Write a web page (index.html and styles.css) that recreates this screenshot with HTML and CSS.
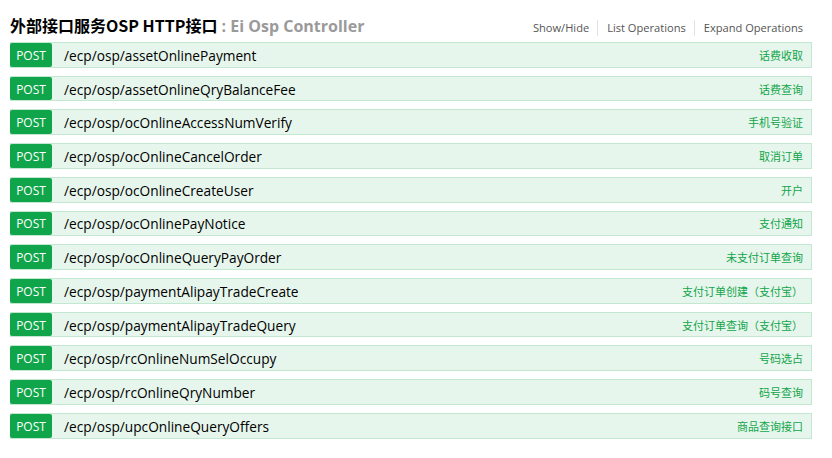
FILE: index.html
```html
<!DOCTYPE html>
<html>
<head>
<meta charset="utf-8">
<link rel="stylesheet" href="styles.css">
</head>
<body>
<div class="resource">
  <div class="header">
    <h2 class="title">外部接口服务OSP HTTP接口<span class="sub"> : Ei Osp Controller</span></h2>
    <ul class="links">
      <li>Show/Hide</li>
      <li>List Operations</li>
      <li>Expand Operations</li>
    </ul>
  </div>
  <ul class="ops">
    <li class="op"><span class="method">POST</span><span class="path">/ecp/osp/assetOnlinePayment</span><span class="desc">话费收取</span></li>
    <li class="op"><span class="method">POST</span><span class="path">/ecp/osp/assetOnlineQryBalanceFee</span><span class="desc">话费查询</span></li>
    <li class="op"><span class="method">POST</span><span class="path">/ecp/osp/ocOnlineAccessNumVerify</span><span class="desc">手机号验证</span></li>
    <li class="op"><span class="method">POST</span><span class="path">/ecp/osp/ocOnlineCancelOrder</span><span class="desc">取消订单</span></li>
    <li class="op"><span class="method">POST</span><span class="path">/ecp/osp/ocOnlineCreateUser</span><span class="desc">开户</span></li>
    <li class="op"><span class="method">POST</span><span class="path">/ecp/osp/ocOnlinePayNotice</span><span class="desc">支付通知</span></li>
    <li class="op"><span class="method">POST</span><span class="path">/ecp/osp/ocOnlineQueryPayOrder</span><span class="desc">未支付订单查询</span></li>
    <li class="op"><span class="method">POST</span><span class="path">/ecp/osp/paymentAlipayTradeCreate</span><span class="desc">支付订单创建（支付宝）</span></li>
    <li class="op"><span class="method">POST</span><span class="path">/ecp/osp/paymentAlipayTradeQuery</span><span class="desc">支付订单查询（支付宝）</span></li>
    <li class="op"><span class="method">POST</span><span class="path">/ecp/osp/rcOnlineNumSelOccupy</span><span class="desc">号码选占</span></li>
    <li class="op"><span class="method">POST</span><span class="path">/ecp/osp/rcOnlineQryNumber</span><span class="desc">码号查询</span></li>
    <li class="op"><span class="method">POST</span><span class="path">/ecp/osp/upcOnlineQueryOffers</span><span class="desc">商品查询接口</span></li>
  </ul>
</div>
</body>
</html>
```

FILE: styles.css
```css
html, body {
  margin: 0;
  padding: 0;
  background: #ffffff;
}
body {
  font-family: "Open Sans", "Noto Sans CJK SC", sans-serif;
  color: #000;
}
.resource {
  padding: 0 20px 0 10px;
}
.header {
  display: flex;
  justify-content: space-between;
  align-items: flex-end;
  height: 42px;
}
.title {
  margin: 0 0 6px 0;
  font-size: 16px;
  font-weight: bold;
  line-height: 20px;
  font-family: "Noto Sans CJK SC", sans-serif;
  color: #000;
}
.title .sub {
  color: #9a9a9a;
  font-family: "Open Sans", "Noto Sans CJK SC", sans-serif;
}
.links {
  list-style: none;
  margin: 0 9px 6px 0;
  padding: 0;
  display: flex;
  font-size: 11.1px;
  line-height: 16px;
  color: #555555;
}
.links li {
  padding: 0 8px 0 9px;
  border-left: 1px solid #e2e2e2;
}
.links li:first-child {
  border-left: none;
}
.links li:last-child {
  padding-right: 0;
}
.ops {
  list-style: none;
  margin: 0;
  padding: 0;
}
.op {
  display: flex;
  align-items: stretch;
  height: 25.73px;
  box-sizing: border-box;
  margin-bottom: 8px;
  background: #e7f6ec;
  border: 1px solid #c3e8d1;
}
.method {
  width: 42px;
  margin: 0 0 0 -1px;
  padding-top: 1px;
  box-sizing: border-box;
  background: #10a54a;
  color: #ffffff;
  font-size: 12px;
  border-radius: 2px;
  display: flex;
  align-items: center;
  justify-content: center;
  font-family: "Open Sans", sans-serif;
}
.path {
  flex: 1;
  padding-left: 12px;
  padding-top: 1px;
  font-size: 13.7px;
  display: flex;
  align-items: center;
  color: #000;
}
.desc {
  display: flex;
  align-items: center;
  padding-right: 8px;
  font-size: 11px;
  color: #10a54a;
  font-family: "Noto Sans CJK SC", sans-serif;
}
```
